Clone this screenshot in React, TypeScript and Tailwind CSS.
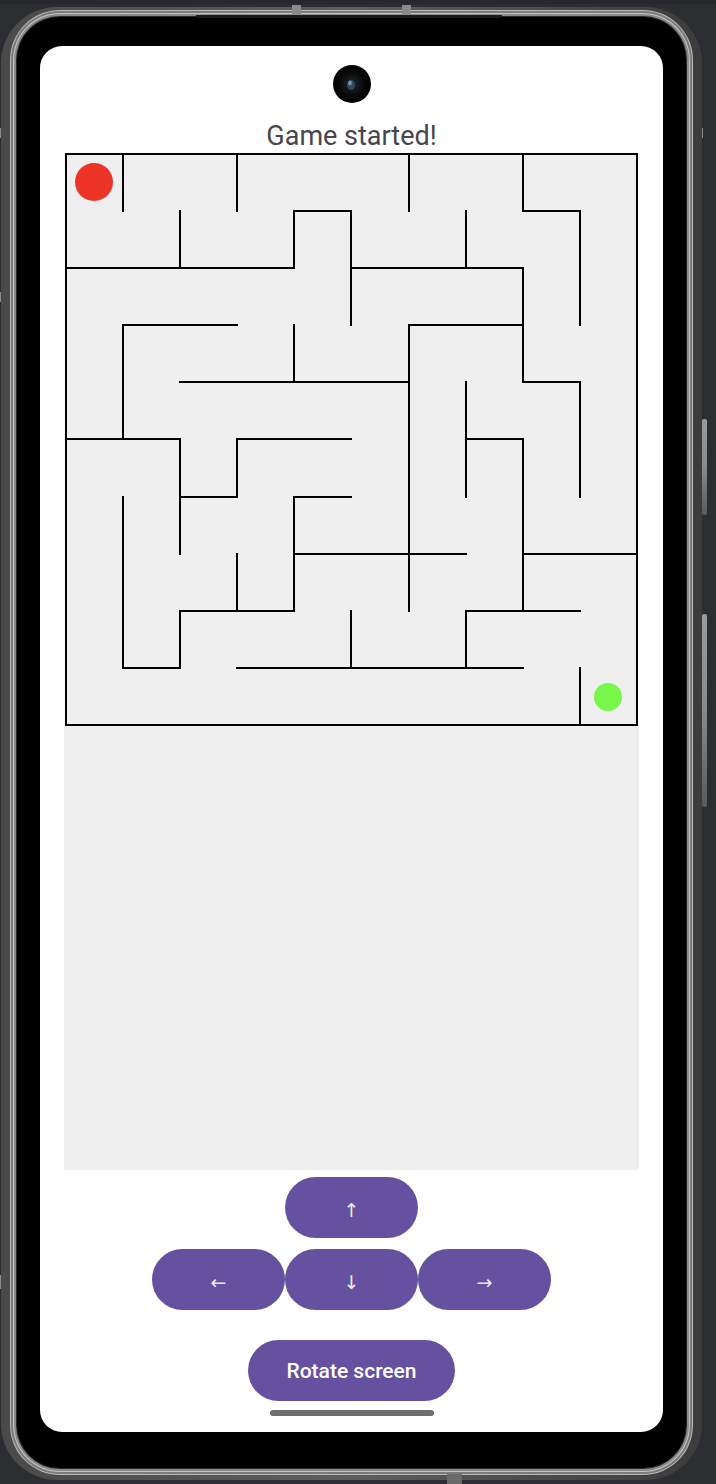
import React from 'react';

// grid line positions inside the maze svg (svg starts at x=64 / y=152 on the page)
const P = [2, 59, 116, 173, 230, 287, 345, 402, 459, 516, 573];

// vertical walls: [col, rowFrom, rowTo]
const V: [number, number, number][] = [
  [1, 0, 1], [3, 0, 1], [6, 0, 1], [8, 0, 1],
  [9, 1, 3], [2, 1, 2], [4, 1, 2], [5, 1, 3], [7, 1, 2],
  [8, 2, 4], [6, 3, 8], [9, 4, 6], [7, 4, 6], [1, 3, 5], [4, 3, 4],
  [2, 5, 7], [3, 5, 6], [8, 5, 8], [1, 6, 9], [2, 8, 9], [3, 7, 8],
  [4, 6, 8], [5, 8, 9], [7, 8, 9], [9, 9, 10],
];

// horizontal walls: [row, colFrom, colTo]
const H: [number, number, number][] = [
  [1, 8, 9], [1, 4, 5], [2, 0, 4], [2, 5, 8], [3, 1, 3], [3, 6, 8],
  [4, 2, 6], [4, 8, 9], [5, 0, 2], [5, 3, 5], [5, 7, 8], [6, 2, 3],
  [6, 4, 5], [7, 4, 7], [7, 8, 10], [8, 2, 4], [8, 7, 9], [9, 1, 2], [9, 3, 8],
];

const Maze: React.FC = () => (
  <svg width={575} height={575} viewBox="0 0 575 575" className="block">
    <rect x={2} y={2} width={571} height={571} fill="#efefef" />
    <rect x={0} y={573} width={575} height={2} fill="#efefef" />
    <g stroke="#000" strokeWidth={2} strokeLinecap="square">
      <rect x={2} y={2} width={571} height={571} fill="none" />
      {V.map(([c, a, b], i) => (
        <line key={'v' + i} x1={P[c]} y1={P[a]} x2={P[c]} y2={P[b]} />
      ))}
      {H.map(([r, a, b], i) => (
        <line key={'h' + i} x1={P[a]} y1={P[r]} x2={P[b]} y2={P[r]} />
      ))}
    </g>
    <circle cx={30} cy={30} r={19} fill="#ee3426" />
    <circle cx={544} cy={545} r={14} fill="#76f74a" />
  </svg>
);

const ArrowButton: React.FC<{ label: string }> = ({ label }) => (
  <button className="w-[133px] h-[61px] rounded-full bg-[#6551a0] text-[#ece8f6] text-[19px] leading-none flex items-center justify-center pt-[5px]">
    {label}
  </button>
);

const App: React.FC = () => {
  return (
    <div className="relative w-[716px] h-[1484px] bg-[#2b2d30] overflow-hidden pt-[7px] pl-[1px] font-['Roboto','DejaVu_Sans',sans-serif]">
      <div className="absolute left-0 top-0 w-full h-[4px] bg-[#26282b]" />

      {/* side buttons */}
      <div className="absolute left-0 top-[128px] w-[9px] h-[10px] bg-[#8a8a8a]" />
      <div className="absolute left-0 top-[292px] w-[9px] h-[10px] bg-[#8a8a8a]" />
      <div className="absolute left-0 top-[1275px] w-[9px] h-[14px] bg-[#8a8a8a]" />
      <div className="absolute left-[696px] top-[128px] w-[7px] h-[10px] bg-[#8a8a8a]" />
      <div className="absolute left-[702px] top-[419px] w-[5px] h-[96px] rounded-[2px] bg-gradient-to-b from-[#9a9a9a] via-[#8a8a8a] to-[#5a5a5a]" />
      <div className="absolute left-[702px] top-[614px] w-[5px] h-[193px] rounded-[2px] bg-gradient-to-b from-[#9a9a9a] via-[#8a8a8a] to-[#5a5a5a]" />

      {/* phone rim */}
      <div className="relative w-[701px] h-[1473px] rounded-[56px] bg-gradient-to-r from-[#4a4a4a] via-[#5e5e5e] to-[#3c3c3c] pt-[3px] px-[9px] pb-[5px]">
        <div className="absolute left-[291px] top-[-2px] w-[9px] h-[12px] bg-[#8a8a8a]" />
        <div className="absolute left-[401px] top-[-2px] w-[9px] h-[12px] bg-[#8a8a8a]" />
        <div className="absolute left-[446px] bottom-[-4px] w-[15px] h-[10px] bg-[#6a6a6a]" />
        <div className="w-full h-full rounded-[50px] bg-[#b8b8b8] p-[1px]">
          <div className="w-full h-full rounded-[49px] bg-[#7a7a7a] p-[2px]">
            <div className="w-full h-full rounded-[47px] bg-[#c4c4c4] p-[1px]">
              <div className="w-full h-full rounded-[46px] bg-[#8a8a8a] p-[2px]">
                <div className="w-full h-full rounded-[44px] bg-[#2a2a2a] p-[1px]">
                  {/* bezel */}
                  <div className="relative w-full h-full rounded-[43px] bg-black pt-[29px] px-[23px] pb-[36px]">
                    <div className="absolute left-[179px] top-[-2px] w-[306px] h-[3px] rounded-b-[3px] bg-[#1a1a1a]" />
                    {/* screen */}
                    <div className="relative w-[623px] h-[1386px] rounded-[22px] bg-white flex flex-col items-center overflow-hidden">
                      {/* camera cutout */}
                      <div className="absolute left-[293px] top-[19px] w-[38px] h-[38px] rounded-full bg-[#050505] flex items-center justify-center">
                        <svg width={38} height={38} viewBox="0 0 38 38">
                          <defs>
                            <radialGradient id="lens" cx="0.5" cy="0.5" r="0.5">
                              <stop offset="0" stopColor="#1c2a33" />
                              <stop offset="0.7" stopColor="#0b0f12" />
                              <stop offset="1" stopColor="#050505" />
                            </radialGradient>
                          </defs>
                          <circle cx={19} cy={19} r={14} fill="url(#lens)" />
                          <ellipse cx={18} cy={20} rx={4} ry={5} fill="#2f4a5a" />
                          <ellipse cx={17} cy={18} rx={2} ry={2.5} fill="#6f8fa8" />
                        </svg>
                      </div>

                      <div className="pt-[74px] text-[27px] leading-[32px] text-[#49454f]">Game started!</div>

                      <Maze />
                      <div className="w-[575px] h-[443px] bg-[#efefef]" />

                      <div className="mt-[7px] flex flex-col items-center gap-[11px]">
                        <ArrowButton label="↑" />
                        <div className="flex">
                          <ArrowButton label="←" />
                          <ArrowButton label="↓" />
                          <ArrowButton label="→" />
                        </div>
                      </div>

                      <button className="mt-[30px] w-[207px] h-[61px] rounded-full bg-[#6551a0] text-white text-[21px] font-medium pt-[3px]">
                        Rotate screen
                      </button>

                      <div className="mt-[9px] w-[164px] h-[6px] rounded-full bg-[#6e6e6e]" />
                    </div>
                  </div>
                </div>
              </div>
            </div>
          </div>
        </div>
      </div>
    </div>
  );
};

export default App;
